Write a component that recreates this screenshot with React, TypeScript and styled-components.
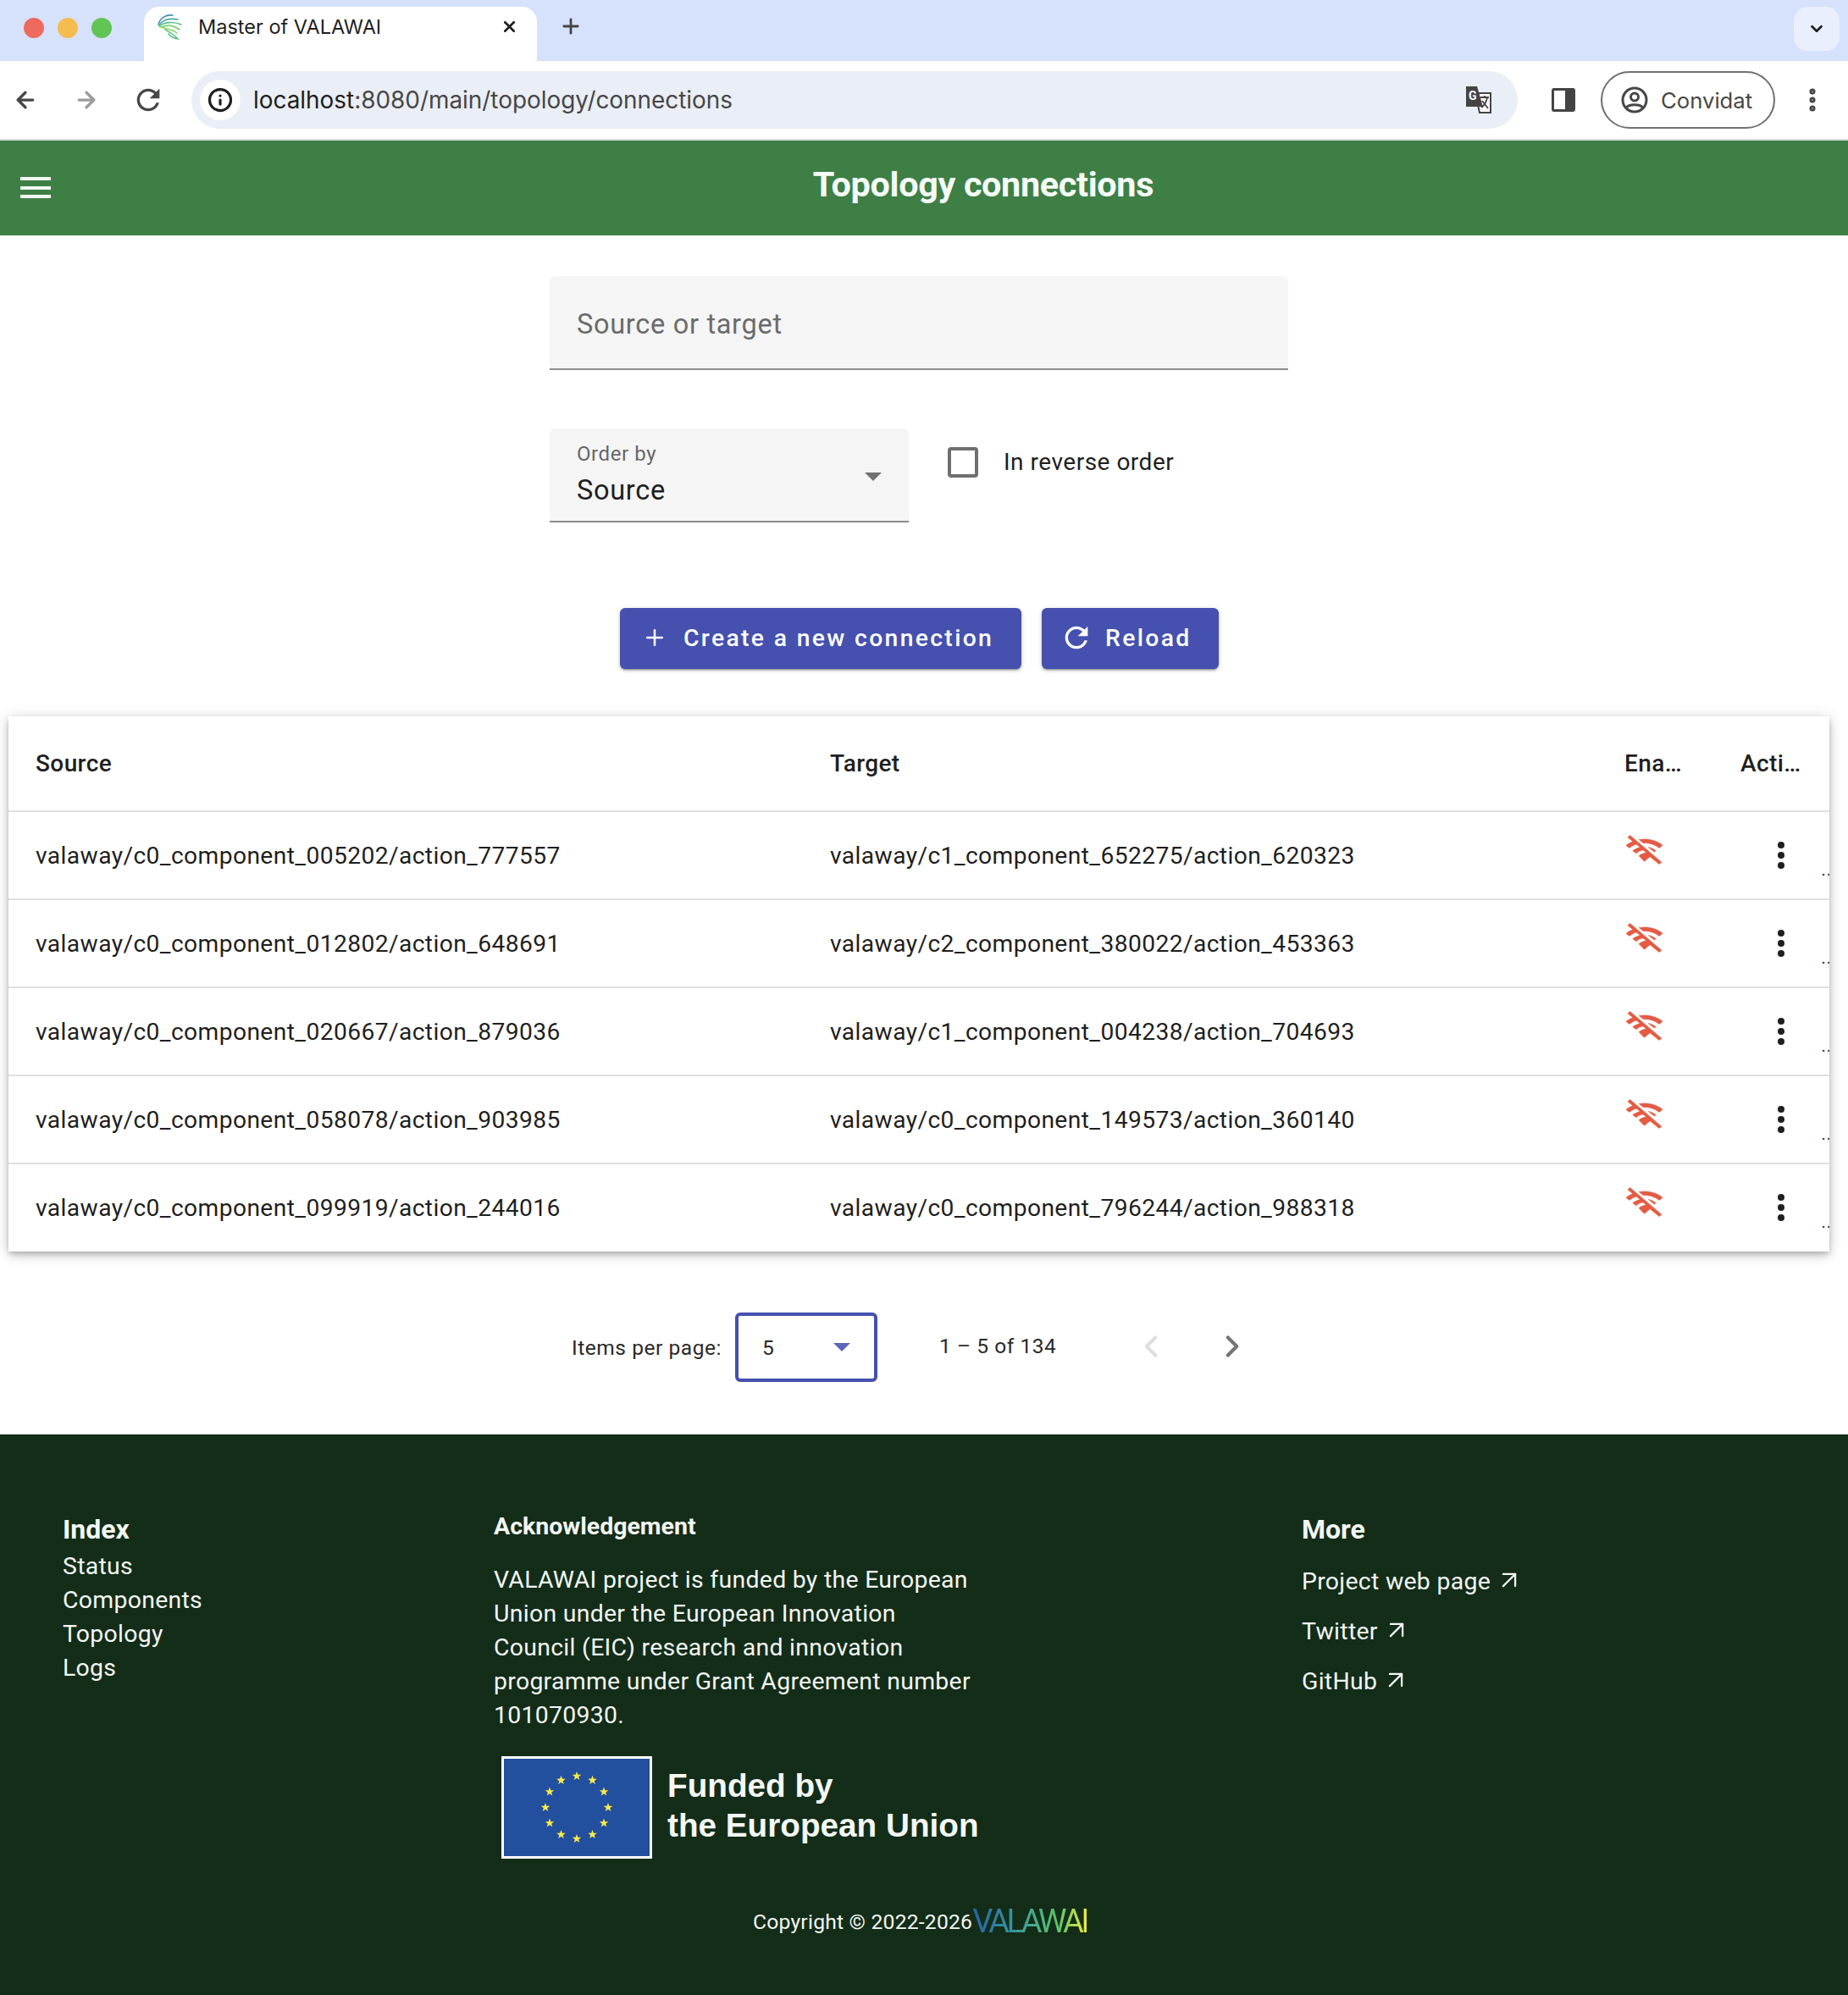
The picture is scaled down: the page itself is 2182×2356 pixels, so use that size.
import React from "react";
import styled, { createGlobalStyle } from "styled-components";
import { ArrowLeft, ArrowRight, Plus, Info, X, ChevronDown, ChevronLeft, ChevronRight, ArrowUpRight, EllipsisVertical } from "lucide-react";
import { MdRefresh } from "react-icons/md";

const GlobalStyle = createGlobalStyle`
  * { box-sizing: border-box; }
  html, body { margin: 0; padding: 0; background: #fff; }
  body { font-family: Roboto, "Liberation Sans", sans-serif; color: #1f1f1f; -webkit-font-smoothing: antialiased; }
`;

const Page = styled.div`
  width: 2182px;
  height: 2356px;
  display: flex;
  flex-direction: column;
  overflow: hidden;
`;

/* browser chrome */
const TabStrip = styled.div`
  height: 72px;
  background: #d6e2fb;
  display: flex;
  align-items: flex-end;
  padding-left: 28px;
  flex: none;
`;
const Lights = styled.div`
  display: flex;
  gap: 16px;
  align-self: flex-start;
  margin-top: 21px;
  width: 142px;
`;
const Light = styled.span<{ $color: string }>`
  width: 24px;
  height: 24px;
  border-radius: 50%;
  background: ${(p) => p.$color};
`;
const Tab = styled.div`
  width: 464px;
  height: 64px;
  background: #fff;
  border-radius: 18px 18px 0 0;
  display: flex;
  align-items: center;
  padding: 0 22px 18px 15px;
  font-family: Inter, "Liberation Sans", sans-serif;
  font-size: 23.5px;
  color: #1f1f1f;
`;
const TabTitle = styled.span`
  margin-left: 17px;
  flex: 1;
`;
const NewTab = styled.div`
  margin: 0 0 9px 26px;
  height: 64px;
  display: flex;
  align-items: center;
  color: #444;
`;
const TabMenu = styled.div`
  margin: 0 10px 12px auto;
  width: 54px;
  height: 52px;
  border-radius: 16px;
  background: #e9effc;
  display: flex;
  align-items: center;
  justify-content: center;
  color: #1f1f1f;
`;
const Toolbar = styled.div`
  height: 94px;
  flex: none;
  background: #fff;
  border-bottom: 2px solid #d9dcd9;
  display: flex;
  align-items: center;
  padding: 0 0 0 15px;
  color: #474747;
`;
const NavButtons = styled.div`
  display: flex;
  align-items: center;
  gap: 42px;
  width: 211px;
`;
const ReloadIcon = styled(MdRefresh)`
  margin-left: -4px;
`;
const UrlBar = styled.div`
  width: 1566px;
  height: 68px;
  border-radius: 34px;
  background: #eaeef6;
  display: flex;
  align-items: center;
  padding: 0 29px 0 10px;
  font-family: Inter, "Liberation Sans", sans-serif;
  font-size: 27.9px;
  color: #474747;
`;
const SiteInfo = styled.span`
  width: 48px;
  height: 48px;
  border-radius: 50%;
  background: #fff;
  display: flex;
  align-items: center;
  justify-content: center;
  color: #1f1f1f;
  margin-right: 15px;
`;
const Host = styled.span`
  color: #1f1f1f;
`;
const UrlText = styled.span`
  flex: 1;
`;
const SidePanel = styled.span`
  width: 28px;
  height: 28px;
  margin: 0 30px 0 40px;
  border: 3px solid #444;
  border-right-width: 12px;
  border-radius: 3px;
`;
const Profile = styled.div`
  width: 206px;
  height: 68px;
  border: 2px solid #707070;
  border-radius: 34px;
  display: flex;
  align-items: center;
  gap: 15px;
  padding-left: 22px;
  font-family: Inter, "Liberation Sans", sans-serif;
  font-size: 25.7px;
  color: #474747;
`;
const Kebab = styled.span`
  margin-left: 27px;
  display: flex;
  color: #474747;
`;

/* app bar */
const AppBar = styled.header`
  height: 112px;
  flex: none;
  background: #3e7f46;
  display: flex;
  align-items: flex-start;
  padding: 0 0 0 24px;
  color: #f5fbf6;
`;
const Burger = styled.div`
  margin-top: 43px;
  width: 36px;
  height: 25px;
  display: flex;
  flex-direction: column;
  justify-content: space-between;
  span {
    height: 4px;
    background: #f2f7f3;
  }
`;
const AppTitle = styled.h1`
  margin: 27px 0 0;
  width: 2128px;
  padding-left: 80px;
  text-align: center;
  font-size: 41.4px;
  line-height: 50px;
  font-weight: 700;
  letter-spacing: -0.35px;
`;

/* filters */
const Main = styled.main`
  flex: 1;
  display: flex;
  flex-direction: column;
`;
const Filters = styled.div`
  width: 872px;
  margin: 48px 0 0 649px;
  display: flex;
  flex-direction: column;
  gap: 69px;
`;
const FilledField = styled.div<{ $width: number }>`
  width: ${(p) => p.$width}px;
  height: 111px;
  background: #f5f5f5;
  border-bottom: 2px solid #8c8c8c;
  border-radius: 6px 6px 0 0;
  padding: 0 32px;
  position: relative;
  display: flex;
  flex-direction: column;
  justify-content: center;
`;
const Placeholder = styled.span`
  font-size: 32.5px;
  letter-spacing: 0.7px;
  color: #6b6b6b;
  margin-top: 4px;
`;
const FloatLabel = styled.span`
  font-size: 24px;
  letter-spacing: 0.6px;
  line-height: 28px;
  color: #666;
  margin-top: -2px;
`;
const FieldValue = styled.span`
  font-size: 32.5px;
  letter-spacing: 0.7px;
  line-height: 38px;
  margin-top: 10px;
  color: #1f1f1f;
`;
const Caret = styled.span<{ $color: string; $size: number }>`
  width: 0;
  height: 0;
  border-left: ${(p) => p.$size}px solid transparent;
  border-right: ${(p) => p.$size}px solid transparent;
  border-top: ${(p) => p.$size}px solid ${(p) => p.$color};
`;
const SelectCaret = styled(Caret)`
  position: absolute;
  right: 32px;
  top: 52px;
`;
const OrderRow = styled.div`
  display: flex;
  align-items: flex-start;
`;
const Check = styled.span`
  width: 36px;
  height: 36px;
  margin: 22px 30px 0 46px;
  border: 4px solid #6f6f6f;
  border-radius: 4px;
`;
const CheckLabel = styled.span`
  margin-top: 22px;
  font-size: 28px;
  line-height: 36px;
  letter-spacing: 0.5px;
  color: #1f1f1f;
`;

/* buttons */
const Actions = styled.div`
  display: flex;
  gap: 24px;
  margin: 101px 0 0 732px;
`;
const RaisedButton = styled.button<{ $width: number }>`
  width: ${(p) => p.$width}px;
  height: 72px;
  border: 0;
  border-radius: 6px;
  background: #4550af;
  color: #fff;
  font-family: inherit;
  font-size: 28.3px;
  font-weight: 500;
  letter-spacing: 2.35px;
  display: flex;
  align-items: center;
  padding: 0 0 2px 26px;
  gap: 19px;
  box-shadow: 0 3px 1px -2px rgba(0, 0, 0, 0.2), 0 2px 3px 0 rgba(0, 0, 0, 0.22), 0 1px 6px 0 rgba(0, 0, 0, 0.12);
`;
const ButtonReload = styled(MdRefresh)`
  margin: 0 -5px;
`;

/* table */
const TableCard = styled.section`
  width: 2150px;
  height: 632px;
  margin: 56px 0 0 10px;
  background: #fff;
  box-shadow: 0 3px 6px -1px rgba(0, 0, 0, 0.2), 0 5px 12px 0 rgba(0, 0, 0, 0.14), 0 1px 18px 0 rgba(0, 0, 0, 0.12);
  overflow: hidden;
`;
const TableRow = styled.div<{ $head?: boolean }>`
  height: ${(p) => (p.$head ? 111 : 104)}px;
  display: grid;
  grid-template-columns: 938px 938px 137px 137px;
  align-items: center;
  border-top: ${(p) => (p.$head ? "0" : "2px solid #e0e0e0")};
  font-size: ${(p) => (p.$head ? 28 : 28.2)}px;
  font-weight: ${(p) => (p.$head ? 500 : 400)};
  letter-spacing: 0.4px;
  color: #1f1f1f;
`;
const Cell = styled.div`
  padding-left: 32px;
  white-space: nowrap;
  position: relative;
`;
const ClippedCell = styled(Cell)`
  overflow: hidden;
`;
const IconCell = styled(Cell)`
  height: 38px;
  margin-top: -15px;
`;
const MenuCell = styled(Cell)`
  display: flex;
  padding-left: 76px;
  height: 100%;
  align-items: center;
  overflow: hidden;
`;
const CutDots = styled.span`
  position: absolute;
  right: -3px;
  bottom: 28px;
  font-size: 20px;
  line-height: 12px;
  letter-spacing: 1px;
  color: #333;
`;
const KebabDot = styled.span`
  display: flex;
  flex-direction: column;
  gap: 4px;
  span {
    width: 8px;
    height: 8px;
    border-radius: 50%;
    background: #1f1f1f;
  }
`;

/* pager */
const Pager = styled.div`
  height: 216px;
  display: flex;
  align-items: flex-start;
  padding: 72px 0 0 675px;
  font-size: 24.5px;
  letter-spacing: 0.55px;
  color: #2a2a2a;
`;
const PagerLabel = styled.span`
  margin-top: 27px;
`;
const PageSize = styled.div`
  width: 168px;
  height: 82px;
  margin-left: 16px;
  border: 4px solid #4550af;
  border-radius: 6px;
  display: flex;
  align-items: center;
  justify-content: space-between;
  padding: 0 28px 0 28px;
`;
const PageRange = styled.span`
  margin: 25px 0 0 73px;
  width: 229px;
`;
const PageButtons = styled.div`
  display: flex;
  gap: 54px;
  margin-top: 19px;
`;

/* footer */
const Footer = styled.footer`
  height: 662px;
  flex: none;
  background: #132d19;
  color: #f4f7f4;
  padding: 93px 0 0 74px;
  position: relative;
  display: grid;
  grid-template-columns: 509px 954px 1fr;
  align-content: start;
`;
const FooterHeading = styled.h3`
  margin: 0;
  font-size: 32px;
  line-height: 38px;
  font-weight: 700;
`;
const AckHeading = styled(FooterHeading)`
  font-size: 28.5px;
  line-height: 34px;
  margin-top: -1px;
  font-weight: 700;
`;
const IndexList = styled.nav`
  display: flex;
  flex-direction: column;
  margin-top: 5px;
  font-size: 28.4px;
  line-height: 40px;
  letter-spacing: 0.3px;
`;
const AckText = styled.p`
  margin: 26px 0 0;
  width: 570px;
  font-size: 28.4px;
  line-height: 40px;
  letter-spacing: 0.3px;
`;
const EuBlock = styled.div`
  display: flex;
  align-items: center;
  margin: 28px 0 0 9px;
  gap: 18px;
`;
const EuFlag = styled.svg`
  width: 178px;
  height: 121px;
  flex: none;
`;
const EuText = styled.div`
  font-family: "Liberation Sans", Arial, sans-serif;
  font-size: 38.7px;
  line-height: 47px;
  font-weight: 700;
  margin-top: -6px;
`;
const MoreList = styled.nav`
  display: flex;
  flex-direction: column;
  gap: 19px;
  margin-top: 23px;
  font-size: 28.4px;
  line-height: 40px;
  letter-spacing: 0.3px;
`;
const MoreLink = styled.a`
  display: flex;
  align-items: center;
  gap: 5px;
  color: inherit;
  svg {
    margin-top: -4px;
  }
`;
const Copyright = styled.div`
  position: absolute;
  left: 889px;
  top: 555px;
  display: flex;
  align-items: center;
  gap: 0;
  font-size: 24.7px;
  letter-spacing: 0.2px;
`;
const ValawaiLogo = styled.span`
  font-family: Roboto, "Liberation Sans", sans-serif;
  font-size: 38px;
  font-weight: 400;
  letter-spacing: -3.6px;
  line-height: 40px;
  background: linear-gradient(90deg, #2463a8 0%, #3b9a9b 40%, #5cc36a 75%, #f0e93d 100%);
  -webkit-background-clip: text;
  background-clip: text;
  color: transparent;
`;

const rows = [
  ["valaway/c0_component_005202/action_777557", "valaway/c1_component_652275/action_620323"],
  ["valaway/c0_component_012802/action_648691", "valaway/c2_component_380022/action_453363"],
  ["valaway/c0_component_020667/action_879036", "valaway/c1_component_004238/action_704693"],
  ["valaway/c0_component_058078/action_903985", "valaway/c0_component_149573/action_360140"],
  ["valaway/c0_component_099919/action_244016", "valaway/c0_component_796244/action_988318"],
];

const WifiOff = () => (
  <svg width="47" height="38" viewBox="0 0 24 24" preserveAspectRatio="none" fill="#e45b43" stroke="#e45b43" strokeWidth="0.35">
    <path d="M22.99 9C19.15 5.16 13.8 3.76 8.84 4.78l2.52 2.52c3.47-.17 6.99 1.05 9.63 3.7l2-2zm-4 4c-1.29-1.29-2.84-2.13-4.49-2.56l3.53 3.53.96-.97zM2 3.05L5.07 6.1C3.6 6.82 2.22 7.78 1 9l1.99 2c1.24-1.24 2.67-2.16 4.2-2.77l2.24 2.24C7.81 11.1 6.27 12 5 13v.01L6.99 15c1.23-1.23 2.65-2.06 4.17-2.49l2.08 2.08c-1.7.24-3.26 1.03-4.49 2.26l-.01.01L12 21l3.45-3.45 5.5 5.5 1.41-1.41L3.41 1.64 2 3.05z" />
  </svg>
);

const Favicon = () => (
  <svg width="32" height="32" viewBox="0 0 32 32" fill="none" strokeWidth="1.600" strokeLinecap="round">
    <path d="M2 14 C4 6 11 2 19 3" stroke="#3f8fb0" />
    <path d="M3 15 C6 9 14 6 25 8" stroke="#49a9a0" />
    <path d="M3 16 C9 11 19 10 29 14" stroke="#5cc08a" />
    <path d="M6 17 C12 14 20 15 27 20" stroke="#78cf70" />
    <path d="M3 16 C8 19 18 19 24 24" stroke="#8ed65c" />
    <path d="M10 20 C15 23 21 26 25 31 C20 30 16 28 14 25" stroke="#5cc08a" />
  </svg>
);

const GoogleTranslate = () => (
  <svg width="34" height="34" viewBox="0 0 34 34">
    <path d="M13 9 H31 V32 H18 Z" fill="#fff" stroke="#444" strokeWidth="2" />
    <path d="M2 1 H15 L22 25 H2 Z" fill="#444" />
    <text x="5" y="17" fontSize="14" fontWeight="700" fontFamily="Roboto" fill="#fff">G</text>
    <path d="M19 14 H29 M24 12 V14 M27 14 C26 20 23 24 20 26 M21 18 L28 27" stroke="#444" strokeWidth="1.800" fill="none" />
  </svg>
);

const AccountIcon = () => (
  <svg width="32" height="32" viewBox="0 0 32 32" fill="none" stroke="#474747" strokeWidth="3">
    <circle cx="16" cy="16" r="14" />
    <circle cx="16" cy="12.500" r="4.500" />
    <path d="M6.500 25 C9 20.500 23 20.500 25.500 25" />
  </svg>
);

const stars = Array.from({ length: 12 }, (_, i) => {
  const a = (i * Math.PI) / 6;
  const cx = 89 + 37 * Math.sin(a);
  const cy = 60.500 - 37 * Math.cos(a);
  const pts = Array.from({ length: 10 }, (_, k) => {
    const r = k % 2 ? 2.300 : 5.600;
    const b = (k * Math.PI) / 5;
    return `${(cx + r * Math.sin(b)).toFixed(2)},${(cy - r * Math.cos(b)).toFixed(2)}`;
  }).join(" ");
  return pts;
});

export default function App() {
  return (
    <Page>
      <GlobalStyle />
      <TabStrip>
        <Lights>
          <Light $color="#ee6a5f" />
          <Light $color="#f5bd4f" />
          <Light $color="#61c454" />
        </Lights>
        <Tab>
          <Favicon />
          <TabTitle>Master of VALAWAI</TabTitle>
          <X size={21} strokeWidth={3} color="#1f1f1f" />
        </Tab>
        <NewTab>
          <Plus size={28} strokeWidth={2.4} />
        </NewTab>
        <TabMenu>
          <ChevronDown size={22} strokeWidth={3} />
        </TabMenu>
      </TabStrip>
      <Toolbar>
        <NavButtons>
          <ArrowLeft size={30} strokeWidth={2.6} />
          <ArrowRight size={30} strokeWidth={2.6} color="#9b9b9b" />
          <ReloadIcon size={40} />
        </NavButtons>
        <UrlBar>
          <SiteInfo>
            <Info size={30} strokeWidth={2.6} />
          </SiteInfo>
          <UrlText>
            <Host>localhost</Host>:8080/main/topology/connections
          </UrlText>
          <GoogleTranslate />
        </UrlBar>
        <SidePanel />
        <Profile>
          <AccountIcon />
          Convidat
        </Profile>
        <Kebab>
          <EllipsisVertical size={34} strokeWidth={3} />
        </Kebab>
      </Toolbar>

      <AppBar>
        <Burger>
          <span />
          <span />
          <span />
        </Burger>
        <AppTitle>Topology connections</AppTitle>
      </AppBar>

      <Main>
        <Filters>
          <FilledField $width={872}>
            <Placeholder>Source or target</Placeholder>
          </FilledField>
          <OrderRow>
            <FilledField $width={424}>
              <FloatLabel>Order by</FloatLabel>
              <FieldValue>Source</FieldValue>
              <SelectCaret $color="#707070" $size={10} />
            </FilledField>
            <Check />
            <CheckLabel>In reverse order</CheckLabel>
          </OrderRow>
        </Filters>

        <Actions>
          <RaisedButton $width={474}>
            <Plus size={30} strokeWidth={2} />
            Create a new connection
          </RaisedButton>
          <RaisedButton $width={209}>
            <ButtonReload size={40} />
            Reload
          </RaisedButton>
        </Actions>

        <TableCard>
          <TableRow $head>
            <Cell>Source</Cell>
            <Cell>Target</Cell>
            <ClippedCell>Ena…</ClippedCell>
            <ClippedCell>Acti…</ClippedCell>
          </TableRow>
          {rows.map(([source, target]) => (
            <TableRow key={source}>
              <Cell>{source}</Cell>
              <Cell>{target}</Cell>
              <IconCell>
                <WifiOff />
              </IconCell>
              <MenuCell>
                <KebabDot>
                  <span />
                  <span />
                  <span />
                </KebabDot>
                <CutDots>..</CutDots>
              </MenuCell>
            </TableRow>
          ))}
        </TableCard>

        <Pager>
          <PagerLabel>Items per page:</PagerLabel>
          <PageSize>
            5
            <Caret $color="#5b66bb" $size={10} />
          </PageSize>
          <PageRange>1 – 5 of 134</PageRange>
          <PageButtons>
            <ChevronLeft size={42} strokeWidth={2.4} color="#dfdfdf" />
            <ChevronRight size={42} strokeWidth={2.4} color="#757575" />
          </PageButtons>
        </Pager>
      </Main>

      <Footer>
        <div>
          <FooterHeading>Index</FooterHeading>
          <IndexList>
            <span>Status</span>
            <span>Components</span>
            <span>Topology</span>
            <span>Logs</span>
          </IndexList>
        </div>
        <div>
          <AckHeading>Acknowledgement</AckHeading>
          <AckText>
            VALAWAI project is funded by the European Union under the European Innovation Council (EIC) research and
            innovation programme under Grant Agreement number 101070930.
          </AckText>
          <EuBlock>
            <EuFlag viewBox="0 0 178 121">
              <rect x="1.500" y="1.500" width="175" height="118" fill="#224f9e" stroke="#fff" strokeWidth="3" />
              {stars.map((pts, i) => (
                <polygon key={i} points={pts} fill="#fbe94a" />
              ))}
            </EuFlag>
            <EuText>
              Funded by
              <br />
              the European Union
            </EuText>
          </EuBlock>
        </div>
        <div>
          <FooterHeading>More</FooterHeading>
          <MoreList>
            <MoreLink>
              Project web page <ArrowUpRight size={34} strokeWidth={1.6} />
            </MoreLink>
            <MoreLink>
              Twitter <ArrowUpRight size={34} strokeWidth={1.6} />
            </MoreLink>
            <MoreLink>
              GitHub <ArrowUpRight size={34} strokeWidth={1.6} />
            </MoreLink>
          </MoreList>
        </div>
        <Copyright>
          Copyright © 2022-2026
          <ValawaiLogo>VALAWAI</ValawaiLogo>
        </Copyright>
      </Footer>
    </Page>
  );
}
